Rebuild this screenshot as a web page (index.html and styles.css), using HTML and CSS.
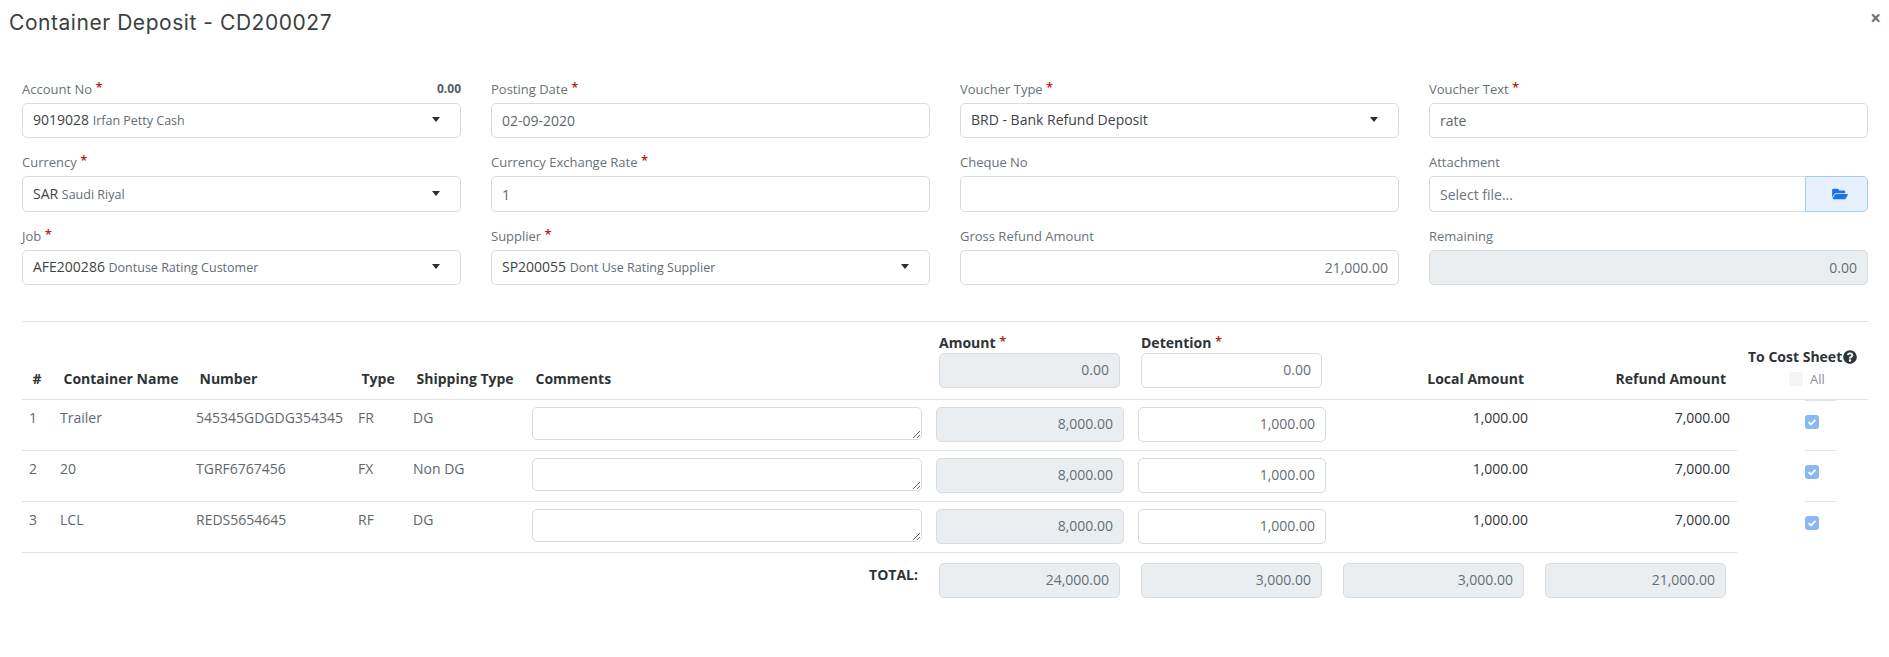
FILE: index.html
```html
<!DOCTYPE html>
<html lang="en">
<head>
<meta charset="utf-8">
<title>Container Deposit</title>
<link rel="stylesheet" href="styles.css">
</head>
<body>
<div class="modal">
  <header class="modal-head">
    <h1 class="modal-title">Container Deposit - CD200027</h1>
    <button class="close" type="button">×</button>
  </header>
  <section class="form-grid">
    <div class="field">
      <div class="label-row"><label>Account No <span class="req">*</span></label><b class="balance">0.00</b></div>
      <div class="control select"><span>9019028 <small>Irfan Petty Cash</small></span><i class="caret"></i></div>
    </div>
    <div class="field">
      <div class="label-row"><label>Posting Date <span class="req">*</span></label></div>
      <div class="control">02-09-2020</div>
    </div>
    <div class="field">
      <div class="label-row"><label>Voucher Type <span class="req">*</span></label></div>
      <div class="control select"><span>BRD - Bank Refund Deposit</span><i class="caret"></i></div>
    </div>
    <div class="field">
      <div class="label-row"><label>Voucher Text <span class="req">*</span></label></div>
      <div class="control">rate</div>
    </div>
    <div class="field">
      <div class="label-row"><label>Currency <span class="req">*</span></label></div>
      <div class="control select"><span>SAR <small>Saudi Riyal</small></span><i class="caret"></i></div>
    </div>
    <div class="field">
      <div class="label-row"><label>Currency Exchange Rate <span class="req">*</span></label></div>
      <div class="control">1</div>
    </div>
    <div class="field">
      <div class="label-row"><label>Cheque No</label></div>
      <div class="control"></div>
    </div>
    <div class="field">
      <div class="label-row"><label>Attachment</label></div>
      <div class="file">
        <div class="control file-name">Select file...</div>
        <div class="file-btn">
          <svg class="folder" viewBox="0 0 576 512"><path d="M572.694 292.093L500.27 416.248A63.997 63.997 0 0 1 444.989 448H45.025c-18.523 0-30.064-20.093-20.731-36.093l72.424-124.155A64 64 0 0 1 152 256h399.964c18.523 0 30.064 20.093 20.73 36.093zM152 224h328v-48c0-26.51-21.49-48-48-48H272l-64-64H48C21.49 64 0 85.49 0 112v278.046l69.077-118.418C86.214 242.25 117.989 224 152 224z"/></svg>
        </div>
      </div>
    </div>
    <div class="field">
      <div class="label-row"><label>Job <span class="req">*</span></label></div>
      <div class="control select"><span>AFE200286 <small>Dontuse Rating Customer</small></span><i class="caret"></i></div>
    </div>
    <div class="field">
      <div class="label-row"><label>Supplier <span class="req">*</span></label></div>
      <div class="control select"><span>SP200055 <small>Dont Use Rating Supplier</small></span><i class="caret"></i></div>
    </div>
    <div class="field">
      <div class="label-row"><label>Gross Refund Amount</label></div>
      <div class="control num">21,000.00</div>
    </div>
    <div class="field">
      <div class="label-row"><label>Remaining</label></div>
      <div class="control num off">0.00</div>
    </div>
  </section>
  <hr class="rule">
  <section class="lines">
    <table class="grid">
      <colgroup>
        <col class="c-idx"><col class="c-name"><col class="c-number"><col class="c-type"><col class="c-ship"><col class="c-comm"><col class="c-amt"><col class="c-amt"><col class="c-amt"><col class="c-amt">
      </colgroup>
      <thead>
        <tr>
          <th>#</th><th>Container Name</th><th>Number</th><th>Type</th><th>Shipping Type</th><th>Comments</th>
          <th class="th-input"><div class="th-label">Amount <span class="req">*</span></div><div class="control num off">0.00</div></th>
          <th class="th-input"><div class="th-label">Detention <span class="req">*</span></div><div class="control num">0.00</div></th>
          <th class="right">Local Amount</th><th class="right">Refund Amount</th>
        </tr>
      </thead>
      <tbody>
        <tr>
          <td>1</td><td>Trailer</td><td>545345GDGDG354345</td><td>FR</td><td>DG</td>
          <td class="cell-input"><textarea class="comment"></textarea></td>
          <td class="cell-input"><div class="control num off">8,000.00</div></td>
          <td class="cell-input"><div class="control num">1,000.00</div></td>
          <td class="right">1,000.00</td><td class="right">7,000.00</td>
        </tr>
        <tr>
          <td>2</td><td>20</td><td>TGRF6767456</td><td>FX</td><td>Non DG</td>
          <td class="cell-input"><textarea class="comment"></textarea></td>
          <td class="cell-input"><div class="control num off">8,000.00</div></td>
          <td class="cell-input"><div class="control num">1,000.00</div></td>
          <td class="right">1,000.00</td><td class="right">7,000.00</td>
        </tr>
        <tr>
          <td>3</td><td>LCL</td><td>REDS5654645</td><td>RF</td><td>DG</td>
          <td class="cell-input"><textarea class="comment"></textarea></td>
          <td class="cell-input"><div class="control num off">8,000.00</div></td>
          <td class="cell-input"><div class="control num">1,000.00</div></td>
          <td class="right">1,000.00</td><td class="right">7,000.00</td>
        </tr>
      </tbody>
      <tfoot>
        <tr>
          <td colspan="6" class="total-label">TOTAL:</td>
          <td class="total-cell"><div class="control num off">24,000.00</div></td>
          <td class="total-cell"><div class="control num off">3,000.00</div></td>
          <td class="total-cell"><div class="control num off">3,000.00</div></td>
          <td class="total-cell"><div class="control num off">21,000.00</div></td>
        </tr>
      </tfoot>
    </table>
    <div class="cost">
      <div class="cost-head">
        <div class="cost-title">To Cost Sheet<svg class="help" viewBox="0 0 512 512"><path d="M504 256c0 136.997-111.043 248-248 248S8 392.997 8 256C8 119.083 119.043 8 256 8s248 111.083 248 248zM262.655 90c-54.497 0-89.255 22.957-116.549 63.758-3.536 5.286-2.353 12.415 2.715 16.258l34.699 26.31c5.205 3.947 12.621 3.008 16.665-2.122 17.864-22.658 30.113-35.797 57.303-35.797 20.429 0 45.698 13.148 45.698 32.958 0 14.976-12.363 22.667-32.534 33.976C247.128 238.528 216 254.941 216 296v4c0 6.627 5.373 12 12 12h56c6.627 0 12-5.373 12-12v-1.333c0-28.462 83.186-29.647 83.186-106.667 0-58.002-60.165-102-116.531-102zM256 338c-25.365 0-46 20.635-46 46 0 25.364 20.635 46 46 46s46-20.636 46-46c0-25.365-20.635-46-46-46z"/></svg></div>
        <div class="cost-all"><i class="box"></i><span>All</span></div>
      </div>
      <div class="cost-row first"><i class="box on"><svg viewBox="0 0 14 14"><path d="M3.6 7.2l2.3 2.2 4.5-4.6" /></svg></i></div>
      <div class="cost-row"><i class="box on"><svg viewBox="0 0 14 14"><path d="M3.6 7.2l2.3 2.2 4.5-4.6" /></svg></i></div>
      <div class="cost-row"><i class="box on"><svg viewBox="0 0 14 14"><path d="M3.6 7.2l2.3 2.2 4.5-4.6" /></svg></i></div>
    </div>
  </section>
</div>
</body>
</html>
```
FILE: styles.css
```css
* { box-sizing: border-box; }
html, body { margin: 0; padding: 0; background: #fff; }
body {
  font-family: "Open Sans", "Liberation Sans", sans-serif;
  font-size: 14px;
  color: #3e4b5b;
  height: 657px;
  overflow: hidden;
}
.modal { padding: 0 21px 0 22px; }
.modal-head {
  display: flex;
  justify-content: space-between;
  height: 78.75px;
  margin: 0 -21px 0 -22px;
  padding: 10px 8px 0 9px;
}
.modal-title {
  margin: 0;
  font-family: Inter, "Liberation Sans", sans-serif;
  font-size: 21px;
  line-height: 26px;
  font-weight: 400;
  letter-spacing: 0.55px;
  color: #3a3f44;
}
.close {
  border: 0;
  background: none;
  padding: 0;
  height: 16px;
  font: bold 19px/16px "Open Sans", sans-serif;
  color: #6f747a;
  margin-top: 0;
}
.form-grid {
  display: grid;
  grid-template-columns: repeat(4, 439px);
  column-gap: 30px;
  row-gap: 14px;
}
.label-row {
  display: flex;
  justify-content: space-between;
  align-items: center;
  height: 20px;
  margin-bottom: 4px;
  font-size: 13px;
  line-height: 20px;
  color: #6a727a;
}
.balance { font-size: 12px; color: #555d66; }
.req { color: #b71c1c; font-weight: 600; font-size: 13px; position: relative; top: -2px; }
.control {
  height: 35.5px;
  border: 1px solid #d8dbe0;
  border-radius: 5px;
  padding: 0 10px;
  display: flex;
  align-items: center;
  font-size: 14px;
  color: #5f676e;
  background: #fff;
}
.select { justify-content: space-between; padding: 0 20px 2px 10px; color: #3e4348; }
.select small { font-size: 12.5px; color: #646c74; }
.caret {
  width: 0;
  height: 0;
  border-left: 4.5px solid transparent;
  border-right: 4.5px solid transparent;
  border-top: 5px solid #2b2f33;
  display: block;
}
.num { justify-content: flex-end; color: #666e75; }
.off { background: #ebeef1; }
.file { display: flex; }
.file-name { flex: 1; border-right: 0; border-radius: 5px 0 0 5px; color: #6d757d; }
.file-btn {
  width: 63px;
  height: 35.5px;
  background: #e7f1fd;
  border: 1px solid #a5cbf5;
  border-radius: 0 5px 5px 0;
  display: flex;
  align-items: center;
  justify-content: center;
  padding-left: 6px;
}
.folder { width: 16px; height: 14px; fill: #1a73e8; }
.rule { border: 0; border-top: 1px solid #dfe2e6; margin: 35.75px 0 0; }
.lines { display: flex; }
.grid { border-collapse: collapse; table-layout: fixed; width: 1715px; }
.c-idx { width: 31px; }
.c-name { width: 136px; }
.c-number { width: 162px; }
.c-type { width: 55px; }
.c-ship { width: 119px; }
.c-comm { width: 404px; }
.c-amt { width: 202px; }
.grid th {
  font-size: 14px;
  font-weight: 700;
  color: #2f3437;
  text-align: left;
  vertical-align: bottom;
  padding: 0 11px 10px 10.5px;
  line-height: 20px;
  border-bottom: 1px solid #dfe2e6;
  height: 77px;
  white-space: nowrap;
}
.grid th.th-input { padding: 0 11px 11px 10px; }
.th-label { line-height: 18px; margin-bottom: 1px; }
.th-input .control { font-weight: 400; height: 35px; }
.grid td {
  font-size: 14px;
  line-height: 20px;
  vertical-align: top;
  padding: 8px 7px 0;
  height: 51px;
  border-bottom: 1px solid #dfe2e6;
  color: #5f676e;
  white-space: nowrap;
}
.grid .right { text-align: right; }
.grid th.right { padding-right: 11px; }
.grid td.right { color: #2f3437; }
.grid td.cell-input { padding: 7px 7px 0; }
.comment {
  display: block;
  width: 100%;
  height: 33px;
  border: 1px solid #d8dbe0;
  border-radius: 5px;
  resize: vertical;
  background: #fff;
  margin: 0;
}
.grid tfoot td { border-bottom: 0; height: 57px; }
.grid td.total-label { text-align: right; padding: 12px 11px 0 0; font-weight: 700; color: #2f3437; font-size: 14px; }
.grid td.total-cell { padding: 10px 11px 0 10px; }
.cost { width: 131px; }
.cost-head { height: 78px; border-bottom: 1px solid #dfe2e6; padding-top: 25px; }
.cost-title {
  margin-left: 11px;
  font-size: 14px;
  font-weight: 700;
  line-height: 20px;
  color: #2f3437;
  display: flex;
  align-items: center;
  gap: 1px;
  white-space: nowrap;
}
.help { width: 14px; height: 14px; fill: #2f3437; }
.cost-all { display: flex; align-items: center; margin: 3px 0 0 52px; gap: 7px; font-size: 13px; color: #8a9097; }
.box { display: block; width: 14px; height: 14px; border-radius: 3px; background: #f3f5f7; flex: none; }
.box.on { background: #8ab8f5; }
.box svg { display: block; fill: none; stroke: #fff; stroke-width: 1.8; }
.cost-row { margin-left: 68px; width: 31px; height: 51px; border-top: 1px solid #dfe2e6; padding-top: 14px; }
.cost-row.first { border-top-width: 2px; margin-top: -1px; }
```
